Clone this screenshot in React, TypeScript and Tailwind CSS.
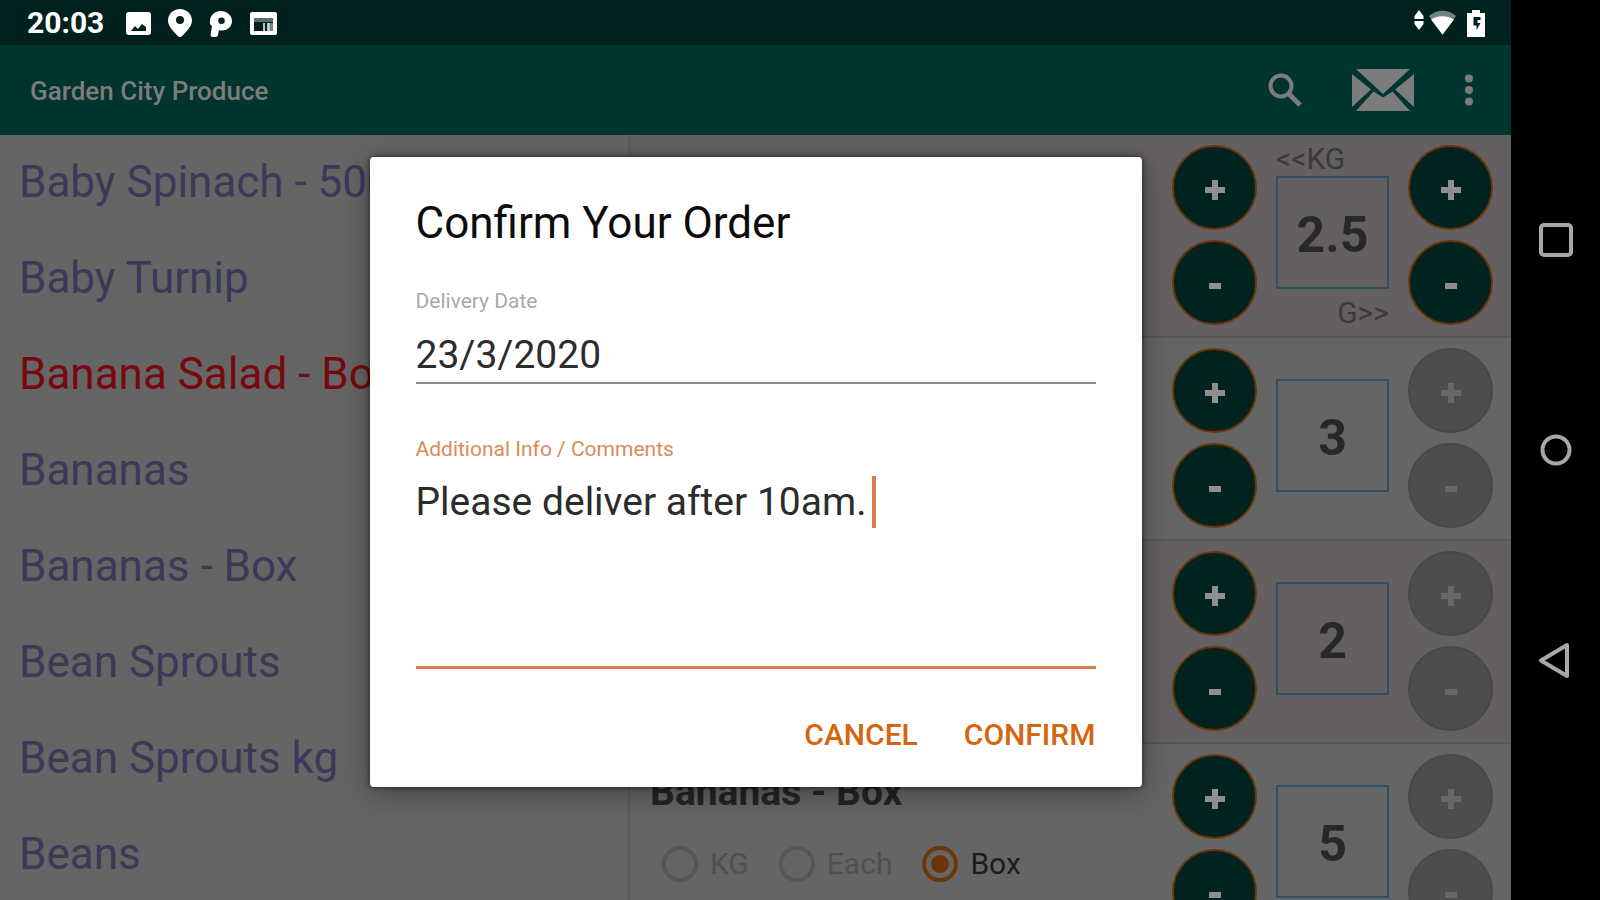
import React from "react";

type Product = { name: string; unavailable?: boolean };
type OrderLine = {
  name?: string;
  quantity: string;
  weighed?: boolean;
  tinted?: boolean;
};

const products: Product[] = [
  { name: "Baby Spinach - 500g" },
  { name: "Baby Turnip" },
  { name: "Banana Salad - Box", unavailable: true },
  { name: "Bananas" },
  { name: "Bananas - Box" },
  { name: "Bean Sprouts" },
  { name: "Bean Sprouts kg" },
  { name: "Beans" },
];

const orderLines: OrderLine[] = [
  { quantity: "2.5", weighed: true, tinted: true },
  { quantity: "3" },
  { quantity: "2", tinted: true },
  { name: "Bananas - Box", quantity: "5" },
];

function StatusBar() {
  return (
    <div className="flex h-[45px] shrink-0 items-center bg-[#00211d] pt-px pr-6 pl-[27px] text-white">
      <span className="w-[99px] text-[30px] leading-none font-bold">20:03</span>
      <svg className="h-7 w-[154px]" viewBox="0 0 154 28" fill="currentColor" aria-hidden="true">
        <path
          fillRule="evenodd"
          d="M3 3h19a3 3 0 0 1 3 3v17a3 3 0 0 1-3 3H3a3 3 0 0 1-3-3V6a3 3 0 0 1 3-3ZM5 22h15v-4l-4-3-4 5-3-3Z"
        />
        <path
          fillRule="evenodd"
          d="M54 0c6.600 0 12 5 12 11.500C66 18 59 24 54 29c-5-5-12-11-12-17.500C42 5 47.400 0 54 0Zm0 7a4 4 0 1 0 0 8 4 4 0 0 0 0-8Z"
        />
        <path
          fillRule="evenodd"
          d="M94.500 2C101 2 106 6.500 106 12S101.500 21.500 96 21.500c-1.500 0-2.500 0-3-.500l-1 5c-.500 1.500-1.500 2-3 2h-2c-2 0-2.700-1-2.300-3L86 17c-2-1-2.500-3-2-6 1-5.500 5-9 10.500-9Zm1 6.500a3.300 3.300 0 1 0 0 6.600 3.300 3.300 0 0 0 0-6.600Z"
        />
        <path
          fillRule="evenodd"
          d="M126 3h23a2 2 0 0 1 2 2v19a2 2 0 0 1-2 2h-23a2 2 0 0 1-2-2V5a2 2 0 0 1 2-2Zm2 6v13h19V9Z"
        />
        <path opacity=".35" d="M128 9h19v4h-19Z" />
        <path opacity=".75" d="M137 14h2v8h-2ZM141 14h3v8h-3Z" />
        <path opacity=".45" d="M144 14h3v8h-3Z" />
      </svg>
      <svg className="ml-auto h-7 w-[74px]" viewBox="0 0 74 28" fill="currentColor" aria-hidden="true">
        <path d="M6 1l4.500 6v3h-9V7ZM1.500 12h9v3L6 21l-4.500-6Z" />
        <path opacity=".45" d="M16 7c8-7 19-7 27 0L29.500 26Z" />
        <path d="M18 10.500c7-4.500 16-4.500 23 0L29.500 25.500Z" />
        <path
          fillRule="evenodd"
          d="M59 1h8v3h5v24H54V4h5Zm1.500 7v8.500h3V21l4-7h-3V11h3V8Z"
        />
      </svg>
    </div>
  );
}

function AppBar() {
  return (
    <header className="flex h-[90px] shrink-0 items-center bg-[#00352f] pr-[37px] pl-[30px] text-[#7c7c7c]">
      <h1 className="grow pt-0.5 text-[26px] leading-none font-medium">Garden City Produce</h1>
      <div className="flex items-center">
        <button type="button" aria-label="Search" className="mr-[50px]">
          <svg className="size-[34px]" viewBox="0 0 34 34" fill="none" stroke="currentColor" strokeWidth="4">
            <circle cx="13" cy="13" r="10.500" />
            <path d="M20.500 20.500 32 32" strokeWidth="5" />
          </svg>
        </button>
        <button type="button" aria-label="Mail order" className="mr-[50px]">
          <svg className="h-[42px] w-[62px]" viewBox="0 0 62 42" fill="currentColor">
            <path d="M4 0h54L31 25Z" />
            <path d="M0 5l19 15.500L0 38Z" />
            <path d="M62 5 43 20.500l19 17.500Z" />
            <path d="M21.500 22.500 31 28.500l9.500-6L58 42H4Z" />
          </svg>
        </button>
        <button type="button" aria-label="More options">
          <svg className="h-8 w-[10px]" viewBox="0 0 10 32" fill="currentColor">
            <circle cx="5" cy="4.500" r="4" />
            <circle cx="5" cy="16" r="4" />
            <circle cx="5" cy="27.500" r="4" />
          </svg>
        </button>
      </div>
    </header>
  );
}

function ProductList() {
  return (
    <ul className="w-[630px] shrink-0 border-r-2 border-[#5c5c5c] bg-[#656565]">
      {products.map((product) => (
        <li key={product.name} className="h-24">
          <a
            href="#"
            className={
              product.unavailable
                ? "block px-[19px] text-[44px] leading-[94px] text-[#76090d]"
                : "block px-[19px] text-[44px] leading-[94px] text-[#3b3858]"
            }
          >
            {product.name}
          </a>
        </li>
      ))}
    </ul>
  );
}

function Stepper({ label, disabled }: { label: string; disabled?: boolean }) {
  const style = disabled
    ? "size-[85px] rounded-full border-2 border-[#484848] bg-[#4d4d4d] pt-1 text-[#686868]"
    : "size-[85px] rounded-full border-2 border-[#6b3506] bg-[#00231f] pt-1 text-[#8f8f8f]";
  return (
    <div className="flex flex-col gap-[10px]">
      <button type="button" disabled={disabled} aria-label={`Increase ${label}`} className={style}>
        <svg className="mx-auto size-5" viewBox="0 0 20 20" stroke="currentColor" strokeWidth="6">
          <path d="M10 0v20M0 10h20" />
        </svg>
      </button>
      <button type="button" disabled={disabled} aria-label={`Decrease ${label}`} className={style}>
        <svg className="mx-auto size-5" viewBox="0 0 20 20" stroke="currentColor" strokeWidth="6">
          <path d="M4 11h12" />
        </svg>
      </button>
    </div>
  );
}

function UnitChoice({ unit, selected }: { unit: string; selected?: boolean }) {
  return (
    <label
      className={
        selected
          ? "flex items-center gap-3 text-[30px] leading-9 text-[#1c1c1c]"
          : "flex items-center gap-3 text-[30px] leading-9 text-[#4f4f4f]"
      }
    >
      <input
        type="radio"
        name="unit"
        defaultChecked={selected}
        disabled={!selected}
        className="grid size-9 appearance-none place-items-center rounded-full border-4 border-[#565656] before:size-[18px] before:rounded-full checked:border-[#6b3604] checked:before:bg-[#6b3604]"
      />
      {unit}
    </label>
  );
}

function OrderRow({ line }: { line: OrderLine }) {
  return (
    <li
      className={
        line.tinted
          ? "flex h-[203px] shrink-0 gap-[19px] border-b-2 border-[#565455] bg-[#646062] pt-[10px] pr-[18px] pl-5"
          : "flex h-[203px] shrink-0 gap-[19px] border-b-2 border-[#565656] bg-[#656565] pt-[10px] pr-[18px] pl-5"
      }
    >
      <div className="flex grow flex-col gap-7 pt-3">
        {line.name && (
          <>
            <h2 className="text-[39px] leading-[52px] font-bold text-[#242424]">{line.name}</h2>
            <div className="flex gap-[30px] pl-3">
              <UnitChoice unit="KG" />
              <UnitChoice unit="Each" />
              <UnitChoice unit="Box" selected />
            </div>
          </>
        )}
      </div>
      <Stepper label="whole amount" />
      <div className="flex w-[113px] flex-col text-[30px] leading-7 text-[#3a393a]">
        <span className="h-[31px]">{line.weighed && "<<KG"}</span>
        <input
          readOnly
          aria-label="Quantity"
          value={line.quantity}
          className="h-[113px] w-full border-2 border-[#2d5064] pt-1 text-center text-[50px] font-bold text-[#282828]"
        />
        <span className="pt-[10px] text-right">{line.weighed && "G>>"}</span>
      </div>
      <Stepper label="fraction" disabled={!line.weighed} />
    </li>
  );
}

function ConfirmDialog() {
  return (
    <div className="absolute inset-0 flex items-start justify-center pt-[157px]">
      <div
        role="dialog"
        aria-modal="true"
        aria-labelledby="dialog-title"
        className="w-[772px] rounded-[4px] bg-white px-[46px] pt-10 pb-[34px] shadow-[0_6px_30px_rgba(0,0,0,0.35),0_0_5px_rgba(0,0,0,0.7)]"
      >
        <h2 id="dialog-title" className="text-[44px] leading-[52px] text-[#0c0c0c]">
          Confirm Your Order
        </h2>
        <div className="flex flex-col pt-10">
          <label htmlFor="delivery-date" className="text-[21px] leading-6 text-[#a9a9a9]">
            Delivery Date
          </label>
          <input
            id="delivery-date"
            defaultValue="23/3/2020"
            className="h-[71px] border-b-2 border-[#8c8c8c] pt-[15px] text-[39px] text-[#2c2c2c] outline-none"
          />
        </div>
        <div className="relative flex flex-col pt-[53px]">
          <label htmlFor="comments" className="text-[21px] leading-6 text-[#dc8a58]">
            Additional Info / Comments
          </label>
          <textarea
            id="comments"
            defaultValue="Please deliver after 10am. "
            className="h-[208px] resize-none overflow-hidden border-b-[3px] border-[#d97d4c] pt-[15px] text-[39px] leading-[52px] text-[#2c2c2c] outline-none"
          />
          <span aria-hidden="true" className="absolute top-[92px] left-[456px] h-[52px] w-1 bg-[#d97d4c]" />
        </div>
        <div className="flex justify-end gap-[46px] pt-[48px] text-[30px] leading-[36px] font-medium text-[#d5650f]">
          <button type="button">CANCEL</button>
          <button type="button">CONFIRM</button>
        </div>
      </div>
    </div>
  );
}

function NavigationRail() {
  return (
    <nav className="flex w-[89px] shrink-0 flex-col items-center justify-center gap-[174px] bg-black text-[#a8a8a8]">
      <button type="button" aria-label="Recent apps">
        <svg className="size-9" viewBox="0 0 36 36" fill="none" stroke="currentColor" strokeWidth="4">
          <rect x="3" y="3" width="30" height="30" rx="3" />
        </svg>
      </button>
      <button type="button" aria-label="Home">
        <svg className="size-9" viewBox="0 0 36 36" fill="none" stroke="currentColor" strokeWidth="4">
          <circle cx="18" cy="18" r="13.500" />
        </svg>
      </button>
      <button type="button" aria-label="Back">
        <svg className="size-9" viewBox="0 0 36 36" fill="none" stroke="currentColor" strokeWidth="4" strokeLinejoin="round">
          <path d="M29 3v31L3 18.500Z" />
        </svg>
      </button>
    </nav>
  );
}

export default function App() {
  return (
    <div className="flex h-screen overflow-hidden bg-black font-['Roboto',sans-serif]">
      <div className="relative flex min-w-0 grow flex-col">
        <StatusBar />
        <AppBar />
        <main className="flex min-h-0 grow overflow-hidden">
          <ProductList />
          <ul className="flex min-w-0 grow flex-col">
            {orderLines.map((line) => (
              <OrderRow key={line.quantity} line={line} />
            ))}
          </ul>
        </main>
        <ConfirmDialog />
      </div>
      <NavigationRail />
    </div>
  );
}
